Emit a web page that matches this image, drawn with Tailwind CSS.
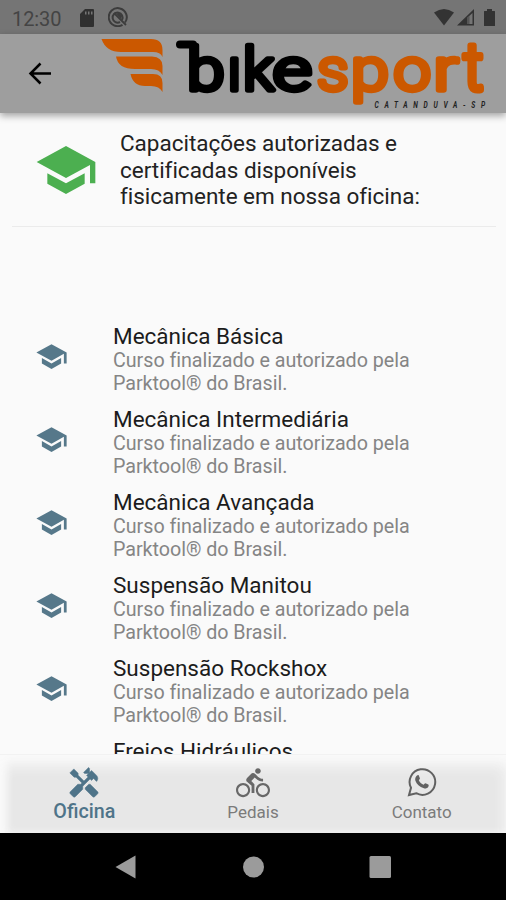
<!DOCTYPE html>
<html lang="pt-BR">
<head>
<meta charset="utf-8">
<title>Bikesport</title>
<script src="https://cdn.jsdelivr.net/npm/@tailwindcss/browser@4"></script>
</head>
<body class="w-[506px] h-[900px] overflow-hidden bg-[#fafafa] font-['Roboto',sans-serif]">
<svg class="hidden">
  <symbol id="cap" viewBox="0 0 24 24"><path d="M5 13.18v4L12 21l7-3.82v-4L12 17l-7-3.82zM12 3L1 9l11 6 9-4.91V17h2V9L12 3z"/></symbol>
</svg>
<div class="flex flex-col w-[506px] h-[900px]">
  <div class="flex items-center h-[34px] shrink-0 bg-[#757575] text-[#444] relative z-10">
    <span class="ml-[12px] mt-[3px] w-[68px] text-[20px] leading-[20px] tracking-[-0.1px]">12:30</span>
    <svg class="w-[14px] h-[18px] mt-[2px]" viewBox="0 0 14 18" fill="#303030"><path fill-rule="evenodd" d="M5 0h8a1 1 0 0 1 1 1v16a1 1 0 0 1-1 1H1a1 1 0 0 1-1-1V5zM5 2.500v3h1.500v-3zM8 2.500v3h1.500v-3zM11 2.500v3h1.500v-3z"/></svg>
    <svg class="w-[20px] h-[20px] ml-[14px]" viewBox="0 0 20 20" fill="none" stroke="#3c3c3c" stroke-width="2"><path d="M17 15.500A9 9 0 1 0 14.500 17.800"/><path d="M14 13a5 5 0 1 0-2 2"/><path d="M6 6l12 12" stroke-width="1.800"/><path d="M8 6.500l3-.5 3 3-1 3z" fill="#3c3c3c" stroke="none"/></svg>
    <svg class="w-[64px] h-[20px] ml-auto mr-[8px] mt-[2px]" viewBox="0 0 64 20" fill="#333"><path d="M0 4.500Q10-2.500 20 4.500L10 17.500z"/><path fill-rule="evenodd" d="M23 17.500L40 1v16.500zM33 10v6h5.500V5z"/><path d="M33 10v6h2.500V8z" fill="#555"/><path d="M53 1h5v2h2.500q.5 0 .5.500v14q0 .5-.5.500h-10q-.5 0-.5-.5v-14q0-.5.5-.5H53z"/></svg>
  </div>
  <header class="h-[79px] shrink-0 bg-[#9e9e9e] relative z-10 flex shadow-[0_3px_7px_rgba(0,0,0,.35)]">
    <svg class="w-[506px] h-[79px]" viewBox="0 34 506 79">
      <path d="M51 73.500H31M40.500 63.500L30.500 73.500 40.500 83.500" fill="none" stroke="#000" stroke-width="2.500"/>
      <g fill="#cb5800">
        <path d="M101.500 39H151Q162.500 39 162.500 50V57Q160.500 52 153 52H121Q106 52 101.500 39Z"/>
        <path d="M116 56.500H152Q162.500 57 162.500 66V75Q159.500 69 151 69H135Q118 69 116 56.500Z"/>
        <path d="M130.500 74H153Q162.500 74 162.500 83V92Q159.500 86 151 86H145Q133 86 130.500 74Z"/>
      </g>
      <path d="M180 44.500H193" stroke="#000" stroke-width="8" stroke-linecap="round"/>
      <g font-family="Roboto,sans-serif" font-size="59" font-weight="300" stroke-width="5.400" stroke-linejoin="round">
        <g fill="#000" stroke="#000">
          <text transform="translate(187 89.500) scale(1.150 1)">b</text>
          <text transform="translate(227.700 89.500) scale(1 1)">ı</text>
          <text transform="translate(243 89.500) scale(1.060 1)">k</text>
          <text transform="translate(272.700 89.500) scale(1.280 1)">e</text>
        </g>
        <g fill="#cb5800" stroke="#cb5800">
          <text transform="translate(317 89.500) scale(1.060 1)">s</text>
          <text transform="translate(351 89.500) scale(1.160 1)">p</text>
          <text transform="translate(393.500 89.500) scale(1.130 1)">o</text>
          <text transform="translate(433.500 89.500) scale(1.240 1)">r</text>
          <text transform="translate(463.500 89.500) scale(1.050 1.140)">t</text>
        </g>
      </g>
      <text transform="translate(374.500 108) scale(.7 1)" x="0" y="0" font-family="Roboto,sans-serif" font-size="9.500" font-weight="700" font-style="italic" fill="#222" textLength="158" lengthAdjust="spacing">CATANDUVA-SP</text>
    </svg>
  </header>
  <main class="h-[641px] shrink-0 overflow-hidden px-[12px]">
    <div class="flex h-[114px] mr-[-2px] border-b border-[#ebebeb] pl-[22px]">
      <svg class="w-[64px] h-[64px] mt-[25px] mr-[22px] shrink-0" fill="#4caf50"><use href="#cap"/></svg>
      <p class="mt-[17px] text-[22.500px] leading-[26.700px] tracking-[-0.020px] text-[#222] whitespace-nowrap">Capacitações autorizadas e<br>certificadas disponíveis<br>fisicamente em nossa oficina:</p>
    </div>
    <ul id="cursos" class="mt-[96px] pl-[23px]"></ul>
  </main>
  <nav class="h-[80px] shrink-0 grid grid-cols-3 bg-[#e7e7e7] border-t border-[#f2f2f2] shadow-[inset_0_10px_14px_#fafafa,inset_6px_0_8px_#fafafa] text-[#7b7b7b] text-[17px] leading-[20px] text-center relative">
    <div class="flex flex-col items-center pt-[11px] text-[#4f7489]">
      <svg class="w-[34px] h-[34px]" viewBox="0 0 24 24" fill="currentColor" stroke="currentColor" stroke-width=".35"><path d="M21.670 18.170l-5.300-5.300h-.99l-2.540 2.540v.99l5.300 5.300c.39.39 1.020.39 1.410 0l2.120-2.120c.39-.38.39-1.020 0-1.410z"/><path d="M17.340 10.190l1.410-1.410 2.120 2.120c1.170-1.170 1.170-3.070 0-4.240l-3.540-3.540-1.410 1.410V1.710L15.220 1l-3.540 3.540.71.710h2.830l-1.410 1.410 1.060 1.060-2.890 2.890-4.130-4.130V5.060L4.830 2.040 2 4.870 5.030 7.900h1.410l4.130 4.130-.85.850H7.600l-5.300 5.300c-.39.39-.39 1.020 0 1.410l2.120 2.120c.39.39 1.020.39 1.410 0l5.300-5.300v-2.120l5.150-5.150z"/></svg>
      <span class="mt-[2px] text-[19.700px] font-medium">Oficina</span>
    </div>
    <div class="flex flex-col items-center pt-[11px]">
      <svg class="w-[34px] h-[34px]" viewBox="0 0 24 24" fill="#686868"><path d="M15.500 5.500c1.100 0 2-.9 2-2s-.9-2-2-2-2 .9-2 2 .9 2 2 2zM5 12c-2.800 0-5 2.200-5 5s2.200 5 5 5 5-2.200 5-5-2.200-5-5-5zm0 8.500c-1.900 0-3.500-1.600-3.500-3.500s1.600-3.500 3.500-3.500 3.500 1.600 3.500 3.500-1.600 3.500-3.500 3.500zm5.800-10l2.400-2.400.8.800c1.300 1.300 3 2.100 5.100 2.100V9c-1.500 0-2.700-.6-3.600-1.500l-1.900-1.900c-.5-.4-1-.6-1.600-.6s-1.100.2-1.400.6L7.800 8.400c-.4.4-.6.900-.6 1.400 0 .6.200 1.100.6 1.400L11 14v5h2v-6.200l-2.200-2.300zM19 12c-2.800 0-5 2.200-5 5s2.200 5 5 5 5-2.200 5-5-2.200-5-5-5zm0 8.500c-1.900 0-3.500-1.600-3.500-3.500s1.600-3.500 3.500-3.500 3.500 1.600 3.500 3.500-1.600 3.500-3.500 3.500z"/></svg>
      <span class="mt-[2px]">Pedais</span>
    </div>
    <div class="flex flex-col items-center pt-[12px]">
      <svg class="w-[30px] h-[30px]" viewBox="0 0 30 30" fill="none"><path d="M2 28L4 20.800A12.800 12.800 0 1 1 9.200 26.200Z" stroke="#616161" stroke-width="2"/><path d="M10 8.500c.6-.6 1.500-.7 1.800 0l1.100 2.700c.2.600-.7 1.500-1.100 2 1 2 2.600 3.500 4.900 4.500.5-.5 1.200-1.700 1.800-1.500l2.800 1.300c.7.400.4 1.600-.1 2.400-1 1.300-2.700 1.800-4.300 1.300-4.500-1.300-7.200-4-8.500-7.500-.6-1.900.2-4.200 1.600-5.200z" fill="#616161"/></svg>
      <span class="mt-[5px]">Contato</span>
    </div>
  </nav>
  <footer class="h-[67px] mt-[-1px] bg-black shrink-0 relative">
    <svg class="w-[506px] h-[67px]" viewBox="0 833 506 67" fill="#9b9b9b"><path d="M115.500 867L135.500 855.500V878.500Z"/><circle cx="253.500" cy="867" r="10.500"/><rect x="369.500" y="856" width="21.500" height="22" rx="1.500"/></svg>
  </footer>
</div>
<script>
const cursos = ["Mecânica Básica", "Mecânica Intermediária", "Mecânica Avançada", "Suspensão Manitou", "Suspensão Rockshox", "Freios Hidráulicos"];
document.getElementById("cursos").innerHTML = cursos.map(c => `
<li class="flex h-[83px]">
  <svg class="w-[33px] h-[33px] mt-[17px] mr-[45px] shrink-0" fill="#56788a"><use href="#cap"/></svg>
  <div class="whitespace-nowrap">
    <p class="text-[22.500px] leading-[26px] text-[#1c1c1c]">${c}</p>
    <p class="mt-[1px] text-[19.700px] leading-[22.600px] tracking-[-0.030px] text-[#858585]">Curso finalizado e autorizado pela<br>Parktool® do Brasil.</p>
  </div>
</li>`).join("");
</script>
</body>
</html>
